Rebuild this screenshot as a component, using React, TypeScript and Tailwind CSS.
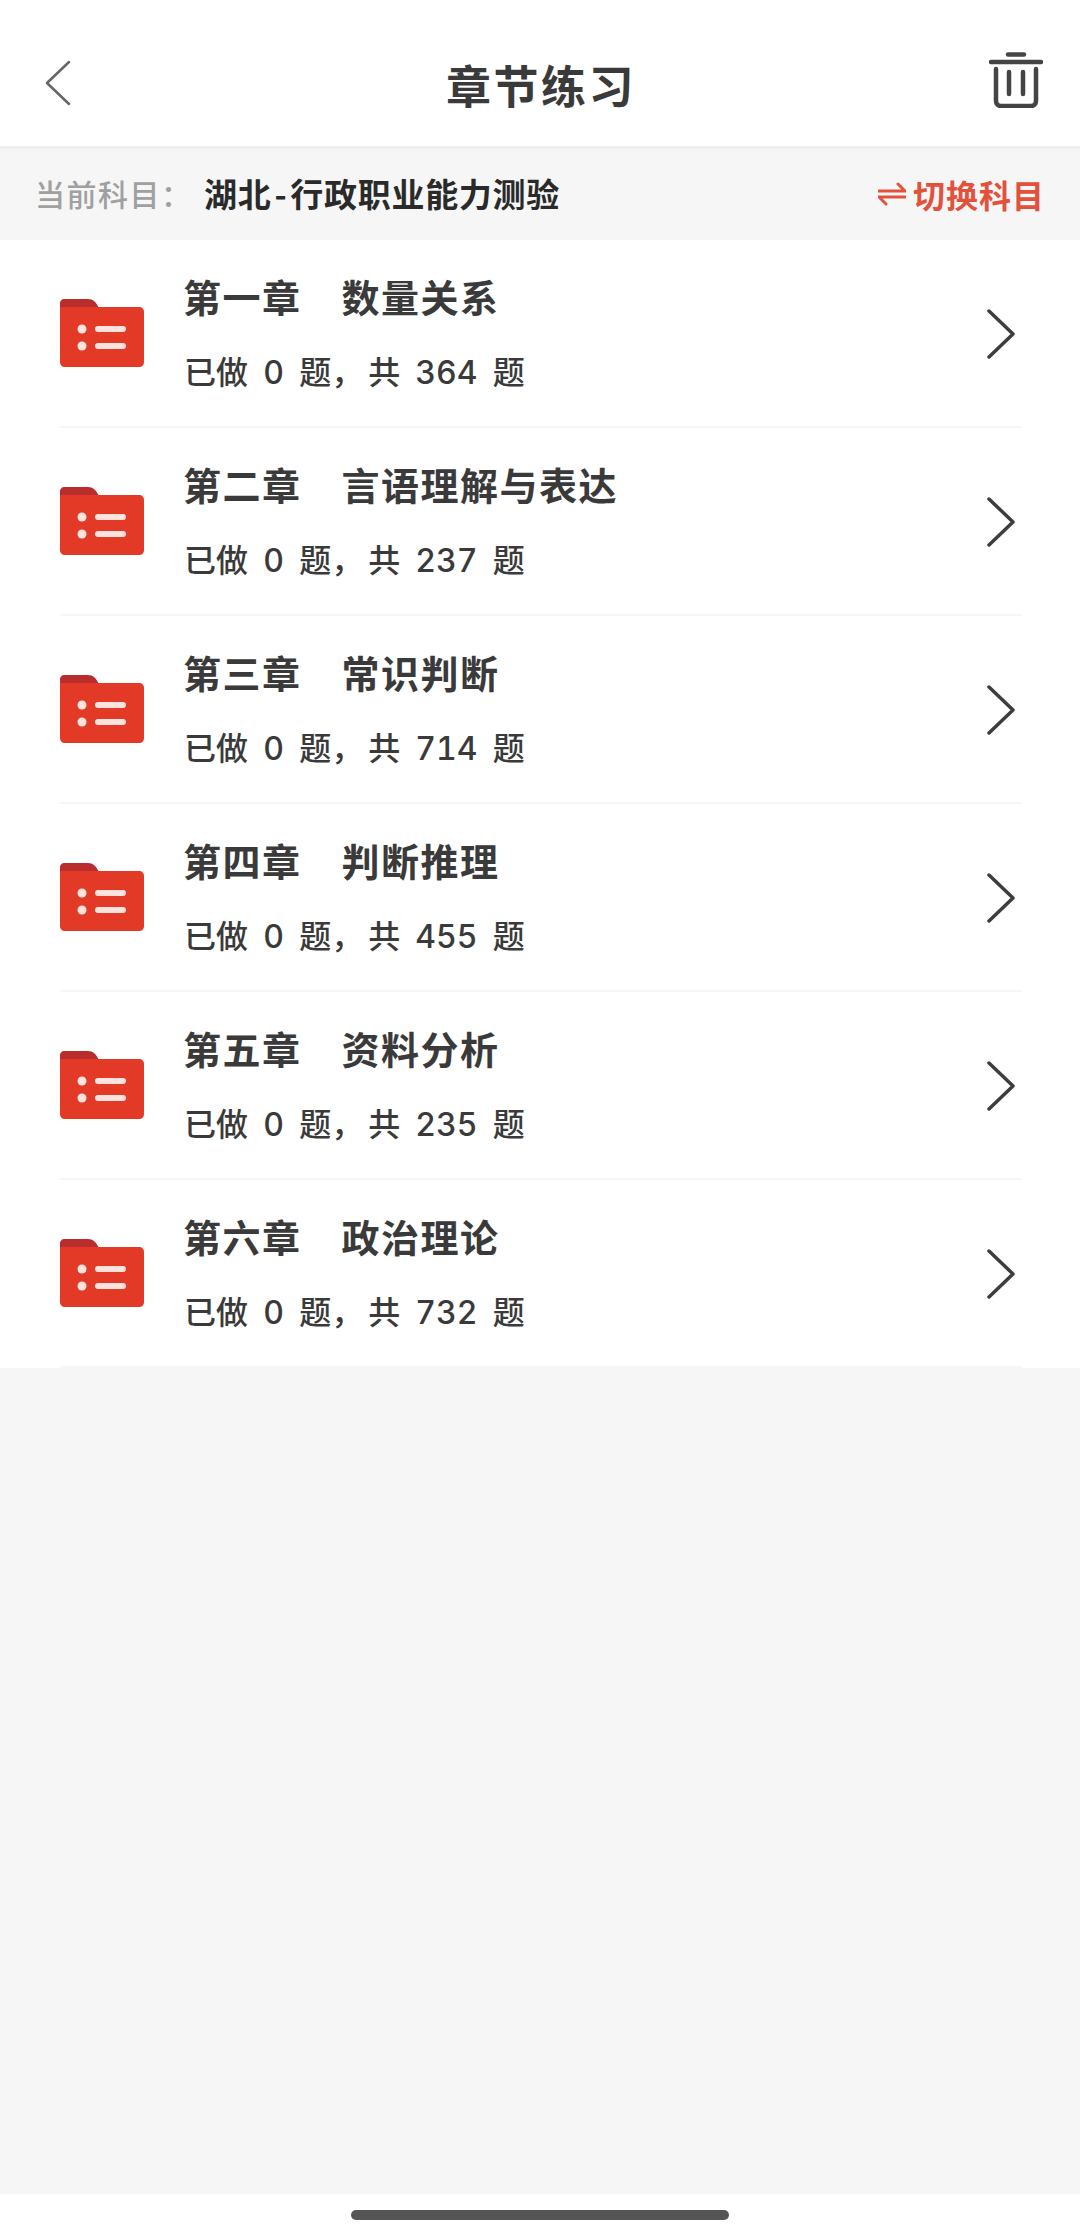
import React from 'react';

const chapters = [
  { no: '第一章', name: '数量关系', total: 364 },
  { no: '第二章', name: '言语理解与表达', total: 237 },
  { no: '第三章', name: '常识判断', total: 714 },
  { no: '第四章', name: '判断推理', total: 455 },
  { no: '第五章', name: '资料分析', total: 235 },
  { no: '第六章', name: '政治理论', total: 732 },
];

const FolderIcon = () => (
  <svg width="84" height="68" viewBox="0 0 84 68" className="shrink-0">
    <path d="M4 0H28C33 0 36 3 39 9H84V9H0V4C0 2 2 0 4 0Z" fill="#b92e2c" />
    <path d="M0 8H79C82 8 84 10 84 13V63C84 66 82 68 79 68H5C2 68 0 66 0 63Z" fill="#e23a26" />
    <circle cx="22" cy="30" r="4.5" fill="#ffe3dc" />
    <circle cx="22" cy="47" r="4.5" fill="#ffe3dc" />
    <rect x="35" y="27" width="31" height="6" rx="3" fill="#ffe3dc" />
    <rect x="35" y="44" width="31" height="6" rx="3" fill="#ffe3dc" />
  </svg>
);

const Chevron = () => (
  <svg width="28" height="50" viewBox="0 0 28 50" fill="none" className="mt-[2px] shrink-0">
    <path d="M2 2L26 25L2 48" stroke="#3d3d3d" strokeWidth="3.5" strokeLinecap="round" strokeLinejoin="round" />
  </svg>
);

const App: React.FC = () => {
  return (
    <div className="flex h-[2237px] flex-col bg-[#f6f6f6] font-['Noto_Sans_CJK_SC','Noto_Sans',sans-serif]">
      {/* Header */}
      <header className="flex h-[149px] shrink-0 items-center justify-between border-b-[3px] border-[#efefef] bg-white pl-[45px] pr-[37px] pt-[24px]">
        <svg width="26" height="46" viewBox="0 0 26 46" fill="none" className="mb-[5px]">
          <path d="M24 2L2 23L24 44" stroke="#666666" strokeWidth="2.5" strokeLinecap="round" strokeLinejoin="round" />
        </svg>
        <h1 className="ml-[22px] mb-[2px] text-[45px] font-bold leading-none tracking-[2.5px] text-[#3a3a3a]">章节练习</h1>
        <svg width="54" height="56" viewBox="0 0 54 56" fill="none" stroke="#444444" strokeWidth="4.5" strokeLinecap="round" className="mb-[11px]">
          <path d="M19 2.5H35" />
          <path d="M2 10H52" />
          <path d="M7 17V49C7 52 9 54 12 54H42C45 54 47 52 47 49V17" />
          <path d="M20 20V42" />
          <path d="M34 20V42" />
        </svg>
      </header>

      {/* Current subject */}
      <div className="flex h-[91px] shrink-0 items-center justify-between px-[35px] pb-[2px]">
        <div className="flex items-center">
          <span className="w-[169px] whitespace-nowrap text-[30px] font-medium tracking-[1.5px] text-[#a0a0a0]">当前科目：</span>
          <span className="text-[33px] font-bold tracking-[0.7px] text-[#2a2a2a]">
            湖北<span className="mx-[3px]">-</span>行政职业能力测验
          </span>
        </div>
        <div className="flex items-center gap-[7px] text-[#e2513c]">
          <svg width="28" height="24" viewBox="0 0 28 24" fill="none" stroke="#e2513c" strokeWidth="3" strokeLinecap="round" strokeLinejoin="round">
            <path d="M1 9H27L20 2" />
            <path d="M27 15H1L8 22" />
          </svg>
          <span className="text-[32px] font-bold leading-none tracking-[1px]">切换科目</span>
        </div>
      </div>

      {/* Chapter list */}
      <ul className="bg-white">
        {chapters.map((c) => (
          <li key={c.no} className="ml-[60px] mr-[58px] flex h-[188px] items-center border-b-[2px] border-[#f6f6f6]">
            <FolderIcon />
            <div className="ml-[39px] flex flex-1 flex-col gap-[28px]">
              <div className="flex text-[38px] font-bold leading-[48px] tracking-[1.5px] text-[#3a3a3a]">
                <span>{c.no}</span>
                <span className="ml-[40px]">{c.name}</span>
              </div>
              <p className="ml-[1px] text-[32px] font-medium leading-[44px] text-[#3a3a3a] [word-spacing:8px]">
                已做 <span className="font-['Inter'] tabular-nums">0</span> 题，<span className="ml-[5px]">共</span>{' '}
                <span className="font-['Inter'] tabular-nums">{c.total}</span> 题
              </p>
            </div>
            <Chevron />
            <span className="w-[7px]" />
          </li>
        ))}
      </ul>

      <div className="flex-1" />

      {/* Home indicator */}
      <div className="flex h-[43px] shrink-0 items-start justify-center bg-white pt-[16px]">
        <div className="h-[10px] w-[378px] rounded-full bg-[#555555]" />
      </div>
    </div>
  );
};

export default App;
